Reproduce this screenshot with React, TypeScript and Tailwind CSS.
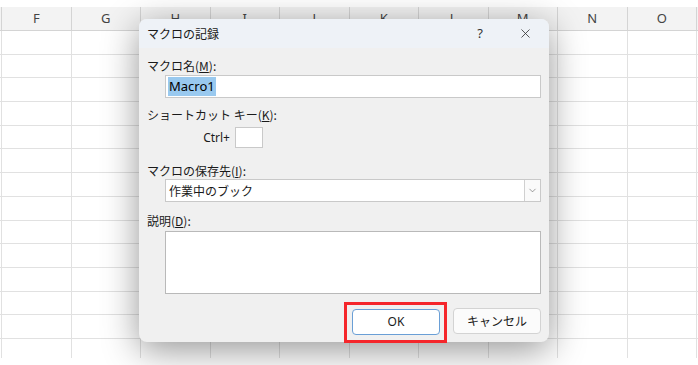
import { X, ChevronDown } from "lucide-react";

const COLS = ["F", "G", "H", "I", "J", "K", "L", "M", "N", "O"];
const ROWS = Array.from({ length: 15 }, (_, i) => i);

const jp = "font-['Noto_Sans_CJK_JP','Noto_Sans',sans-serif]";

function Sheet() {
  return (
    <div className="h-[351px] overflow-hidden bg-white">
      {/* Column headers */}
      <div className="flex h-[24px] border-b border-[#d4d4d4] bg-[#f3f3f3]">
        <div className="w-[2px] shrink-0 border-r border-[#d4d4d4]" />
        {COLS.map((c) => (
          <div
            key={c}
            className="flex w-[69.5px] shrink-0 items-center justify-center border-r border-[#d4d4d4] font-['Noto_Sans',sans-serif] text-[13px] text-[#444]"
          >
            {c}
          </div>
        ))}
      </div>
      {ROWS.map((r) => (
        <div key={r} className="flex h-[23.7px] border-b border-[#e1e1e1]">
          <div className="w-[2px] shrink-0 border-r border-[#e1e1e1]" />
          {COLS.map((c) => (
            <div key={c} className="w-[69.5px] shrink-0 border-r border-[#e1e1e1]" />
          ))}
        </div>
      ))}
    </div>
  );
}

function Label({ text, mn }: { text: string; mn: string }) {
  return (
    <div className={`h-[16px] text-[12px] leading-[16px] text-[#1a1a1a] ${jp}`}>
      {text}(<span className="underline">{mn}</span>):
    </div>
  );
}

function MacroDialog() {
  return (
    <div className="absolute left-[139px] top-[19px] flex h-[323px] w-[410px] flex-col rounded-[8px] bg-[#f0f0f0] shadow-[0_8px_36px_rgba(0,0,0,0.42)]">
      {/* Title bar */}
      <div className="flex h-[29px] items-center rounded-t-[8px] bg-[#eef2f7] pl-[8px]">
        <span className={`text-[12px] text-[#1a1a1a] ${jp}`}>マクロの記録</span>
        <span className="ml-auto w-[20px] text-center font-['Noto_Sans',sans-serif] text-[13px] text-[#333]">?</span>
        <span className="ml-[25px] mr-[14px] flex w-[20px] justify-center text-[#333]">
          <X size={15} strokeWidth={1.3} />
        </span>
      </div>

      {/* Body */}
      <div className="flex flex-1 flex-col pl-[8px] pr-[8px] pt-[10px]">
        <Label text="マクロ名" mn="M" />
        <div className="ml-[18px] mt-[1px] flex h-[23px] items-center border border-[#c9c9c9] bg-white px-[2px]">
          <span className="bg-[#99c9ef] px-[1px] font-['Noto_Sans',sans-serif] text-[13px] leading-[19px] text-black">
            Macro1
          </span>
        </div>

        <div className="mt-[9px]">
          <Label text="ショートカット キー" mn="K" />
        </div>
        <div className="mt-[4px] flex h-[21px] items-center">
          <span className="ml-[55px] w-[28px] text-right font-['Noto_Sans',sans-serif] text-[12px] text-[#1a1a1a]">
            Ctrl+
          </span>
          <div className="ml-[5px] h-[21px] w-[28px] border border-[#c9c9c9] bg-white" />
        </div>

        <div className="mt-[15px]">
          <Label text="マクロの保存先" mn="I" />
        </div>
        <div className="ml-[18px] flex h-[23px] items-stretch border border-[#c9c9c9] bg-white">
          <span className={`flex flex-1 items-center pl-[3px] text-[12px] text-[#1a1a1a] ${jp}`}>
            作業中のブック
          </span>
          <span className="flex w-[16px] items-center justify-center border-l border-[#d0d0d0] bg-[#fafafa] text-[#666]">
            <ChevronDown size={11} strokeWidth={1.4} />
          </span>
        </div>

        <div className="mt-[11px]">
          <Label text="説明" mn="D" />
        </div>
        <div className="ml-[18px] mt-[2px] h-[63px] border border-[#b9b9b9] bg-white" />

        <div className="mt-[14px] flex justify-end gap-[13px]">
          <div className="relative">
            <button
              type="button"
              className="h-[26px] w-[88px] rounded-[4px] border border-[#6a9fd6] bg-white font-['Noto_Sans',sans-serif] text-[12px] text-[#1a1a1a]"
            >
              OK
            </button>
            {/* annotation box */}
            <div className="pointer-events-none absolute -bottom-[8px] -left-[8px] -right-[7px] -top-[6px] border-[3px] border-[#f5262b]" />
          </div>
          <button
            type="button"
            className={`h-[26px] w-[88px] rounded-[4px] border border-[#d3d3d3] bg-[#fbfbfb] text-[12px] text-[#1a1a1a] ${jp}`}
          >
            キャンセル
          </button>
        </div>
      </div>
    </div>
  );
}

export default function App() {
  return (
    <div className="relative h-[365px] w-[698px] overflow-hidden bg-white">
      <div className="h-[7px]" />
      <Sheet />
      <MacroDialog />
    </div>
  );
}
